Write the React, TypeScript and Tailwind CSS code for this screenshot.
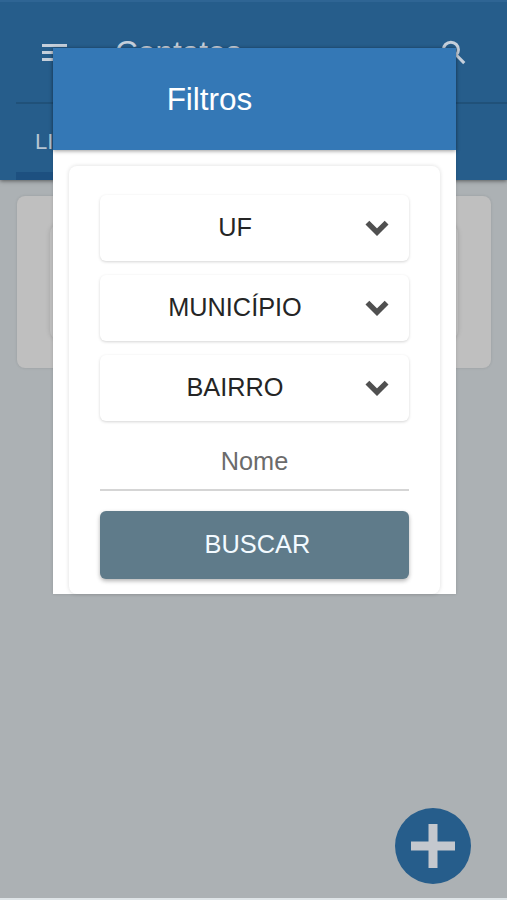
const filters = ["UF", "MUNICÍPIO", "BAIRRO"];

function Chevron() {
  return (
    <svg width="24" height="16" viewBox="0 0 24 16" fill="none" stroke="#505050" strokeWidth="5.4">
      <path d="m2.4 2.6 9.6 9.6 9.6-9.6" />
    </svg>
  );
}

function SelectBox({ label }: { label: string }) {
  return (
    <button className="flex h-[66px] w-full items-center rounded-md bg-white pr-[20px] text-[25.3px] leading-none text-[#252525] shadow-[0_1px_3px_rgba(0,0,0,0.17)]">
      <span className="flex-1 pb-px pl-[5px] text-center">{label}</span>
      <Chevron />
    </button>
  );
}

function Page() {
  return (
    <div className="flex h-[900px] flex-col bg-[#acb1b4]">
      <header className="flex h-[180px] shrink-0 flex-col bg-[#265d8b] shadow-[0_1px_4px_rgba(0,0,0,0.5)]">
        <div className="h-[2px] bg-[#2f6594]" />
        <div className="ml-4 flex h-[102px] items-center border-b-2 border-[#205179] pr-[41px] pl-[26px] text-[#c5cfdb]">
          <div className="flex w-[25px] flex-col gap-[4px]">
            <div className="h-[3px] bg-current" />
            <div className="h-[3px] bg-current" />
            <div className="h-[3px] bg-current" />
          </div>
          <h1 className="ml-[48px] flex-1 pt-[2px] text-[31.6px] leading-none">Contatos</h1>
          <svg width="25" height="25" viewBox="0 0 26 26" fill="none" stroke="currentColor" strokeWidth="3.2">
            <circle cx="10.3" cy="10.1" r="7.8" />
            <path d="m15.6 15.3 8.6 8.7" />
          </svg>
        </div>
        <div className="ml-4 flex h-[76px] w-[120px] flex-col border-b-8 border-[#1d5080] pt-[27px] pl-[19px] text-[22px] leading-none text-[#b6c5d2]">
          LISTA
        </div>
      </header>
      <section className="mr-4 ml-[17px] mt-4 h-[172px] shrink-0 rounded-lg bg-[#bfbfbf] px-[33px] py-[29px] shadow-[0_0_3px_rgba(0,0,0,0.12)]">
        <div className="h-full rounded-lg bg-[#bfbfbf] shadow-[0_0_5px_rgba(0,0,0,0.15)]" />
      </section>
      <div className="flex flex-1 items-end justify-end pr-[36px] pb-[14px]">
        <button className="flex size-[76px] items-center justify-center rounded-full bg-[#265d8b]">
          <svg width="44" height="44" viewBox="0 0 44 44" fill="#c4c8ce">
            <path d="M17.5 0h9v17.5H44v9H26.5V44h-9V26.5H0v-9h17.5z" />
          </svg>
        </button>
      </div>
      <div className="h-[2px] shrink-0 bg-[#dfe5e8]" />
    </div>
  );
}

function FilterDialog() {
  return (
    <div className="absolute top-[48px] left-[53px] flex h-[546px] w-[403px] flex-col bg-white shadow-[0_0_3px_rgba(0,0,0,0.15)]">
      <div className="flex h-[102px] shrink-0 items-center justify-center bg-[#3478b6] pt-[2px] pr-[90px] text-[31.5px] text-white shadow-[0_1px_4px_rgba(0,0,0,0.4)]">
        Filtros
      </div>
      <div className="mx-4 mt-4 flex h-[428px] flex-col rounded-lg px-[31px] pt-[29px] shadow-[0_0_4px_rgba(0,0,0,0.14)]">
        <div className="flex flex-col gap-[14px]">
          {filters.map((label) => (
            <SelectBox key={label} label={label} />
          ))}
        </div>
        <div className="flex h-[70px] items-center justify-center border-b-2 border-[#d5d5d5] pt-[14px] text-[25.3px] leading-none text-[#6b6b6b]">
          Nome
        </div>
        <button className="mt-5 h-[68px] rounded-md bg-[#5f7b8a] pl-[6px] text-[25.4px] leading-none text-[#f2faff] shadow-[0_2px_4px_rgba(0,0,0,0.3)]">
          BUSCAR
        </button>
      </div>
    </div>
  );
}

export default function App() {
  return (
    <main className="relative h-[900px] w-full overflow-hidden font-['Liberation_Sans',Arial,sans-serif]">
      <Page />
      <FilterDialog />
    </main>
  );
}
